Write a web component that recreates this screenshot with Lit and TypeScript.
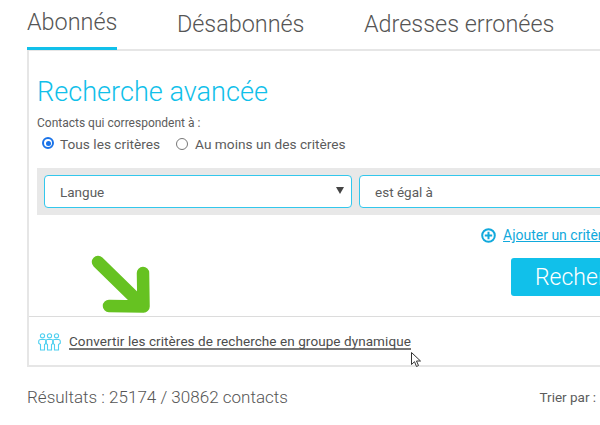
import { LitElement, html, css, svg } from "lit";
import { customElement } from "lit/decorators.js";

@customElement("app-root")
export class AppRoot extends LitElement {
  static styles = css`
    :host {
      display: block;
      position: relative;
      width: 600px;
      height: 425px;
      overflow: hidden;
      background: #fff;
      font-family: Roboto, "Liberation Sans", sans-serif;
      color: #5c5c5c;
    }
    .page { width: 760px; padding-left: 27px; box-sizing: border-box; }
    .tabs { display: flex; gap: 59.5px; height: 49px; align-items: flex-start; }
    .tab {
      font-size: 23.4px; font-weight: 300; line-height: 28px; padding: 10px 0 0; color: #555;
      height: 47px; box-sizing: border-box;
    }
    .tab.first { padding-top: 8px; border-bottom: 3px solid #11c0ea; height: 50px; position: relative; z-index: 1; }
    .panel { border-style: solid; border-color: #e6e6e6; border-width: 2px 0 2px 2px; height: 318px; box-sizing: border-box; display: flex; flex-direction: column; }
    .body { flex: 1; padding: 25px 0 0 8px; position: relative; }
    h1 { margin: 0; font-size: 27.1px; font-weight: 300; line-height: 32px; color: #11c0ea; }
    .lead { font-size: 12px; line-height: 16px; margin-top: 7px; color: #5c5c5c; }
    .radios { display: flex; align-items: center; height: 20px; margin-top: 3px; font-size: 13.7px; color: #5c5c5c; }
    .radio { width: 12px; height: 12px; border-radius: 50%; border: 1px solid #777; box-sizing: border-box; margin: 0 7px 0 0; background: #fff; flex: none; }
    .radio.on { border: 2px solid #1a73e8; padding: 1.500px; background: #1a73e8 content-box; margin: -2px 6px 0 5px; }
    .lab1 { margin-right: 16px; }
    .filter { display: flex; gap: 7px; background: #e8e8e8; padding: 7px; margin-top: 14px; height: 47px; box-sizing: border-box; }
    .field { flex: none; height: 33px; box-sizing: border-box; background: #fff; border: 1px solid #33c7ec; border-radius: 4px; display: flex; align-items: center; padding-left: 15px; font-size: 13.5px; color: #5c5c5c; position: relative; }
    .f1 { width: 308px; }
    .f2 { width: 400px; }
    .caret { position: absolute; right: 7px; top: 11px; width: 0; height: 0; border: 4px solid transparent; border-top: 7px solid #444; border-bottom: 0; }
    .add { display: flex; align-items: center; gap: 7px; margin: 10px 0 0 444px; white-space: nowrap; font-size: 14px; color: #11a9dc; height: 20px; }
    .add a { color: #11a9dc; text-decoration: underline; }
    .btn { margin: 13px 0 0 474px; width: 180px; height: 38px; border-radius: 3px; background: #11c0ea; color: #fff; font-size: 23px; font-weight: 300; display: flex; align-items: center; padding-left: 24px; box-sizing: border-box; }
    .foot { height: 49px; box-sizing: border-box; border-top: 1px solid #dcdcdc; display: flex; align-items: center; gap: 8px; padding: 2px 0 0 9px; font-size: 13.5px; color: #4c4c4c; }
    .foot a { color: #4c4c4c; text-decoration: none; border-bottom: 2px solid #777; line-height: 14px; letter-spacing: 0.08px; }
    .res { display: flex; width: 573px; align-items: center; margin-top: 18px; height: 24px; }
    .count { font-size: 17.05px; font-weight: 300; color: #555; }
    .sort { margin-left: auto; font-size: 13.5px; color: #5c5c5c; width: 60.500px; }
    .arrow { position: absolute; left: 88px; top: 252px; }
    .cursor { position: absolute; left: 410px; top: 351px; }
  `;

  render() {
    return html`
      <div class="page">
        <div class="tabs">
          <div class="tab first">Abonnés</div>
          <div class="tab">Désabonnés</div>
          <div class="tab">Adresses erronées</div>
        </div>
        <div class="panel">
          <div class="body">
            <h1>Recherche avancée</h1>
            <div class="lead">Contacts qui correspondent à :</div>
            <div class="radios">
              <span class="radio on"></span><span class="lab1">Tous les critères</span>
              <span class="radio"></span><span>Au moins un des critères</span>
            </div>
            <div class="filter">
              <div class="field f1">Langue<span class="caret"></span></div>
              <div class="field f2">est égal à</div>
            </div>
            <div class="add">
              <svg width="15" height="15" viewBox="0 0 15 15" fill="none" stroke="#11a9dc" stroke-width="2"><circle cx="7.500" cy="7.500" r="6.300"/><path d="M7.500 3.800v7.400M3.800 7.500h7.400"/></svg>
              <a>Ajouter un critère</a>
            </div>
            <div class="btn">Rechercher</div>
          </div>
          <div class="foot">
            <svg width="23" height="18" viewBox="0 0 23 18" fill="none" stroke="#4fd0f0" stroke-width="1.100">
              ${[4.5, 11.5, 18.5].map(
                (x) => svg`<circle cx=${x} cy="2.800" r="2.100"/><path d="M${x - 2} 17v-5.500l-1.800-1.200v-1.800c0-1.200 1-2 2-2h3.600c1 0 2 .8 2 2v1.800l-1.800 1.200v5.500z"/>`
              )}
            </svg>
            <a>Convertir les critères de recherche en groupe dynamique</a>
          </div>
        </div>
        <div class="res">
          <div class="count">Résultats : 25174 / 30862 contacts</div>
          <div class="sort">Trier par :</div>
        </div>
      </div>
      <svg class="arrow" width="66" height="66" viewBox="0 0 66 66" fill="none" stroke="#66c221" stroke-width="12.500" stroke-linecap="round" stroke-linejoin="round">
        <path d="M10 10L54 53M55 21L55.500 54.500L21 54"/>
      </svg>
      <svg class="cursor" width="12" height="17" viewBox="0 0 12 17">
        <path d="M1.500 1.500v12l3-2.800 2 4.800 2-1-2-4.500h4z" fill="#fff" stroke="#333" stroke-width="1"/>
      </svg>
    `;
  }
}
